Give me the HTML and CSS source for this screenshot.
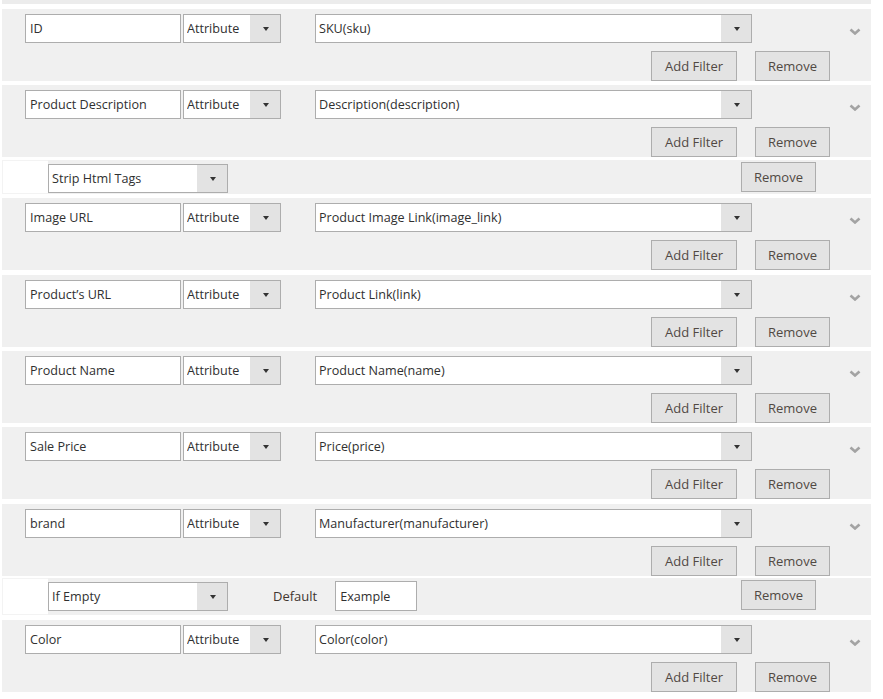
FILE: index.html
```html
<!DOCTYPE html>
<html lang="en">
<head>
    <meta charset="UTF-8">
    <meta name="viewport" content="width=device-width, initial-scale=1.0">
    <title>Feed Mapping</title>
    <link rel="stylesheet" href="styles.css">
</head>
<body>
    <div class="mapping">
        <div class="panel-end"></div>

        <div class="panel">
            <div class="row">
                <input type="text" class="field-name" value="ID">
                <div class="select type"><select><option>Attribute</option></select></div>
                <div class="select source"><select><option>SKU(sku)</option></select></div>
                <svg class="toggle" width="12" height="7" viewBox="0 0 12 7"><polyline points="1.5,1.5 6,5.5 10.5,1.5" fill="none" stroke="#a3a3a3" stroke-width="2.6"/></svg>
            </div>
            <div class="actions">
                <button>Add Filter</button>
                <button class="remove">Remove</button>
            </div>
        </div>

        <div class="panel">
            <div class="row">
                <input type="text" class="field-name" value="Product Description">
                <div class="select type"><select><option>Attribute</option></select></div>
                <div class="select source"><select><option>Description(description)</option></select></div>
                <svg class="toggle" width="12" height="7" viewBox="0 0 12 7"><polyline points="1.5,1.5 6,5.5 10.5,1.5" fill="none" stroke="#a3a3a3" stroke-width="2.6"/></svg>
            </div>
            <div class="actions">
                <button>Add Filter</button>
                <button class="remove">Remove</button>
            </div>
        </div>

        <div class="filter">
            <div class="filter-gap"></div>
            <div class="select modifier"><select><option>Strip Html Tags</option></select></div>
            <button class="remove filter-remove">Remove</button>
        </div>

        <div class="panel">
            <div class="row">
                <input type="text" class="field-name" value="Image URL">
                <div class="select type"><select><option>Attribute</option></select></div>
                <div class="select source"><select><option>Product Image Link(image_link)</option></select></div>
                <svg class="toggle" width="12" height="7" viewBox="0 0 12 7"><polyline points="1.5,1.5 6,5.5 10.5,1.5" fill="none" stroke="#a3a3a3" stroke-width="2.6"/></svg>
            </div>
            <div class="actions">
                <button>Add Filter</button>
                <button class="remove">Remove</button>
            </div>
        </div>

        <div class="panel">
            <div class="row">
                <input type="text" class="field-name" value="Product’s URL">
                <div class="select type"><select><option>Attribute</option></select></div>
                <div class="select source"><select><option>Product Link(link)</option></select></div>
                <svg class="toggle" width="12" height="7" viewBox="0 0 12 7"><polyline points="1.5,1.5 6,5.5 10.5,1.5" fill="none" stroke="#a3a3a3" stroke-width="2.6"/></svg>
            </div>
            <div class="actions">
                <button>Add Filter</button>
                <button class="remove">Remove</button>
            </div>
        </div>

        <div class="panel">
            <div class="row">
                <input type="text" class="field-name" value="Product Name">
                <div class="select type"><select><option>Attribute</option></select></div>
                <div class="select source"><select><option>Product Name(name)</option></select></div>
                <svg class="toggle" width="12" height="7" viewBox="0 0 12 7"><polyline points="1.5,1.5 6,5.5 10.5,1.5" fill="none" stroke="#a3a3a3" stroke-width="2.6"/></svg>
            </div>
            <div class="actions">
                <button>Add Filter</button>
                <button class="remove">Remove</button>
            </div>
        </div>

        <div class="panel">
            <div class="row">
                <input type="text" class="field-name" value="Sale Price">
                <div class="select type"><select><option>Attribute</option></select></div>
                <div class="select source"><select><option>Price(price)</option></select></div>
                <svg class="toggle" width="12" height="7" viewBox="0 0 12 7"><polyline points="1.5,1.5 6,5.5 10.5,1.5" fill="none" stroke="#a3a3a3" stroke-width="2.6"/></svg>
            </div>
            <div class="actions">
                <button>Add Filter</button>
                <button class="remove">Remove</button>
            </div>
        </div>

        <div class="panel">
            <div class="row">
                <input type="text" class="field-name" value="brand">
                <div class="select type"><select><option>Attribute</option></select></div>
                <div class="select source"><select><option>Manufacturer(manufacturer)</option></select></div>
                <svg class="toggle" width="12" height="7" viewBox="0 0 12 7"><polyline points="1.5,1.5 6,5.5 10.5,1.5" fill="none" stroke="#a3a3a3" stroke-width="2.6"/></svg>
            </div>
            <div class="actions">
                <button>Add Filter</button>
                <button class="remove">Remove</button>
            </div>
        </div>

        <div class="filter filter-tall">
            <div class="filter-gap"></div>
            <div class="select modifier"><select><option>If Empty</option></select></div>
            <label class="default-label">Default</label>
            <input type="text" class="default-value" value="Example">
            <button class="remove filter-remove">Remove</button>
        </div>

        <div class="panel">
            <div class="row">
                <input type="text" class="field-name" value="Color">
                <div class="select type"><select><option>Attribute</option></select></div>
                <div class="select source"><select><option>Color(color)</option></select></div>
                <svg class="toggle" width="12" height="7" viewBox="0 0 12 7"><polyline points="1.5,1.5 6,5.5 10.5,1.5" fill="none" stroke="#a3a3a3" stroke-width="2.6"/></svg>
            </div>
            <div class="actions">
                <button>Add Filter</button>
                <button class="remove">Remove</button>
            </div>
        </div>
    </div>
</body>
</html>
```

FILE: styles.css
```css
* {
    margin: 0;
    padding: 0;
    box-sizing: border-box;
    font-family: "Open Sans", Arial, sans-serif;
}
body {
    background: #fff;
    color: #303030;
    font-size: 13px;
}
.mapping {
    width: 869px;
    margin-left: 2px;
}
.panel-end {
    height: 4px;
    background: #ececec;
    margin-bottom: 5px;
}
.panel {
    background: #f0f0f0;
    height: 72px;
    padding-top: 5px;
    margin-bottom: 4.4px;
}
.row {
    display: flex;
    align-items: center;
    height: 29px;
    padding-left: 23px;
}
input {
    height: 29px;
    border: 1px solid #adadad;
    background: #fff;
    padding: 0 4px;
    font-size: 12.6px;
    color: #303030;
    outline: none;
}
.field-name {
    width: 156px;
}
.select {
    position: relative;
    height: 29px;
}
.select select {
    appearance: none;
    -webkit-appearance: none;
    width: 100%;
    height: 29px;
    border: 1px solid #adadad;
    border-radius: 0;
    background: #fff;
    padding: 0 34px 0 3px;
    font-size: 12.6px;
    color: #303030;
    outline: none;
}
.select::after {
    content: "";
    position: absolute;
    top: 1px;
    right: 1px;
    bottom: 1px;
    width: 30px;
    background: #e3e3e3;
    pointer-events: none;
}
.select::before {
    content: "";
    position: absolute;
    z-index: 1;
    top: 13px;
    right: 12px;
    border-left: 3.5px solid transparent;
    border-right: 3.5px solid transparent;
    border-top: 4px solid #333;
    pointer-events: none;
}
.type {
    width: 98px;
    margin-left: 2px;
}
.source {
    width: 437px;
    margin-left: 34px;
}
.toggle {
    margin-left: 97px;
    margin-top: 6px;
}
.actions {
    display: flex;
    justify-content: flex-end;
    gap: 18px;
    margin-top: 8px;
    padding-right: 41px;
}
button {
    height: 30px;
    width: 86px;
    border: 1px solid #adadad;
    background: #e3e3e3;
    color: #514943;
    font-size: 13px;
    cursor: pointer;
}
button.remove {
    width: 75px;
}
.filter {
    display: flex;
    align-items: flex-start;
    height: 34px;
    margin-top: -2px;
    margin-bottom: 4.4px;
    padding-right: 55px;
    background: #f0f0f0;
}
.filter-tall {
    height: 37px;
}
.filter-gap {
    width: 46px;
    align-self: stretch;
    background: #fff;
    border: 1px solid #f3f3f3;
    border-right: none;
}
.modifier {
    width: 180px;
    margin-top: 4px;
}
.default-label {
    margin-left: 45px;
    margin-top: 4px;
    line-height: 29px;
    color: #41362f;
}
.default-value {
    width: 82px;
    margin-left: 18px;
    margin-top: 3px;
    height: 30px;
}
.filter-remove {
    margin-left: auto;
    margin-top: 2px;
    width: 76px;
}
```
